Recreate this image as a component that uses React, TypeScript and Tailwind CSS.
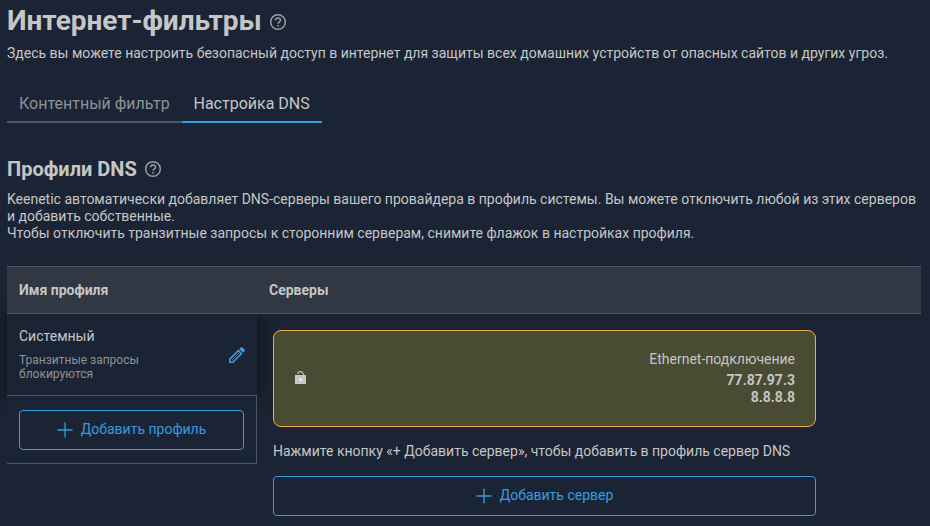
import React from "react";

function HelpIcon({ className = "" }: { className?: string }) {
  return (
    <svg className={className} width="20" height="20" viewBox="0 0 20 20" fill="none" stroke="#9b9ea3">
      <circle cx="10" cy="10" r="7.300" strokeWidth="1.500" />
      <path d="M7.500 8.300C7.500 6.900 8.600 6 10 6s2.500.9 2.500 2.200c0 1.600-2.400 1.800-2.400 3.600" strokeWidth="1.500" />
      <path d="M10.100 13v1.500" strokeWidth="1.600" />
    </svg>
  );
}

function PencilIcon() {
  return (
    <svg className="mr-[3px]" width="16" height="16" viewBox="0 0 16 16">
      <path d="M.8 15.200v-3L9.300 3.700l3 3-8.500 8.500z" fill="none" stroke="#3a9ddb" strokeWidth="1.600" />
      <path d="M3 13l6.500-6.500" stroke="#3a9ddb" strokeWidth=".7" />
      <path d="M10.200 2.100L11.800.5q.8-.8 1.600 0l2.100 2.100q.8.8 0 1.600l-1.600 1.600z" fill="#3a9ddb" />
    </svg>
  );
}

function UnlockIcon() {
  return (
    <svg className="mb-[3px]" width="11" height="13" viewBox="0 0 11 13">
      <path d="M2.600 2.800Q3 .6 5.500.6T8.500 4" fill="none" stroke="#b9b9b4" strokeWidth="1.100" />
      <path fill="#c8c8c6" d="M0 4h11v9H0z" />
      <path fill="#f4f4f4" d="M5 7h1v1h1v1H6v1H5v-1H4V8h1z" />
    </svg>
  );
}

function AddButton({ label }: { label: string }) {
  return (
    <button className="flex h-10 w-full items-center justify-center gap-2 rounded border border-[#3a9ddb] pb-[2px] text-sm text-[#369ce0]">
      <svg className="mt-px" width="16" height="16" viewBox="0 0 16 16">
        <path d="M8 .5v15M.5 8h15" stroke="#3a9ddb" strokeWidth="1.300" />
      </svg>
      {label}
    </button>
  );
}

export default function App() {
  return (
    <main className="h-[526px] w-[930px] overflow-hidden bg-[#1b2434] pl-[7px] font-[Roboto,sans-serif] text-sm leading-[17px] text-[#c6c6c6]">
      <header className="flex h-[45px] items-center gap-[6px] pb-[3px]">
        <h1 className="text-[28px] leading-8 font-bold tracking-[-0.04px]">Интернет-фильтры</h1>
        <HelpIcon className="mt-[2px]" />
      </header>
      <p className="whitespace-nowrap">
        Здесь вы можете настроить безопасный доступ в интернет для защиты всех домашних устройств от опасных сайтов и других угроз.
      </p>
      <nav className="mt-[22px] flex h-[39px] text-base">
        <span className="flex w-[175px] items-center border-b-2 border-[#50565f] pt-[2px] pl-3 whitespace-nowrap text-[#8f9296]">Контентный фильтр</span>
        <span className="flex w-[140px] items-center border-b-2 border-[#3a9ddb] pt-[2px] pl-[11.500px] whitespace-nowrap">Настройка DNS</span>
      </nav>
      <section className="mt-[34px]">
        <div className="flex h-6 items-center gap-[6px]">
          <h2 className="text-xl font-bold">Профили DNS</h2>
          <HelpIcon />
        </div>
        <p className="mt-[10px] whitespace-nowrap">
          Keenetic автоматически добавляет DNS-серверы вашего провайдера в профиль системы. Вы можете отключить любой из этих серверов
          <br />
          и добавить собственные.
          <br />
          Чтобы отключить транзитные запросы к сторонним серверам, снимите флажок в настройках профиля.
        </p>
      </section>
      <section className="mt-[24px] w-[914px]">
        <div className="relative z-10 flex h-12 items-center border-y border-[#50565f] bg-[#313743] font-bold">
          <span className="w-[250px] pl-3">Имя профиля</span>
          <span className="pl-3">Серверы</span>
        </div>
        <div className="flex items-start">
          <aside className="w-[250px]">
            <div className="flex h-[81px] items-center justify-between bg-[#1b2434] pr-[9px] pl-3 shadow-[0_0_16px_2px_rgba(0,0,0,0.55)]">
              <div>
                <p>Системный</p>
                <p className="mt-2 text-xs leading-[14px] text-[#8f9296]">
                  Транзитные запросы
                  <br />
                  блокируются
                </p>
              </div>
              <PencilIcon />
            </div>
            <div className="relative h-[69px] border-y border-r border-[#50565f] bg-[#1b2434] pt-[14px] pr-3 pl-3">
              <AddButton label="Добавить профиль" />
            </div>
          </aside>
          <div className="ml-4 w-[543px] pt-4">
            <div className="relative flex h-[97px] items-center justify-between rounded-lg border border-[#f0ad4e] bg-[#494b32] pr-5 pl-[21px]">
              <UnlockIcon />
              <div className="text-right">
                <p className="mb-1">Ethernet-подключение</p>
                <p className="font-bold">77.87.97.3</p>
                <p className="font-bold">8.8.8.8</p>
              </div>
            </div>
            <p className="mt-4 mb-4 whitespace-nowrap">Нажмите кнопку «+ Добавить сервер», чтобы добавить в профиль сервер DNS</p>
            <AddButton label="Добавить сервер" />
          </div>
        </div>
      </section>
    </main>
  );
}
